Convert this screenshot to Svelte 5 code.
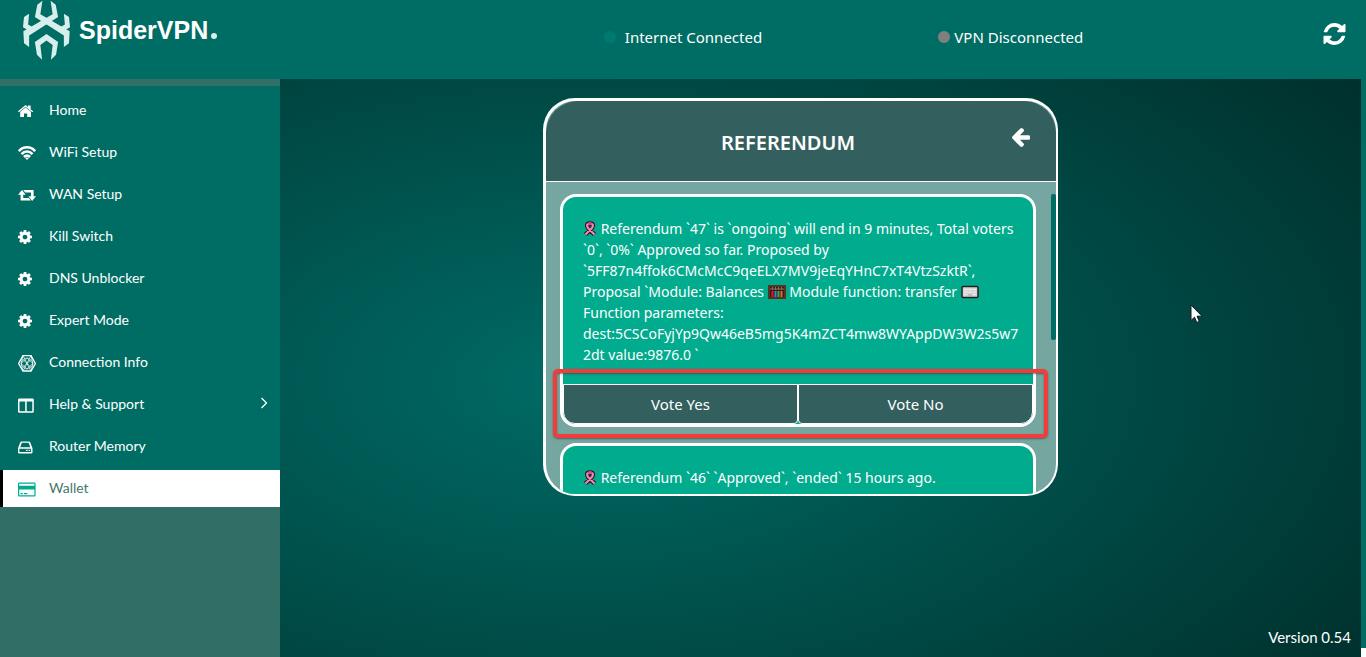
<script lang="ts">
	type Item = { label: string; icon: string; expandable?: boolean };

	const items: Item[] = [
		{ label: 'Home', icon: 'home' },
		{ label: 'WiFi Setup', icon: 'wifi' },
		{ label: 'WAN Setup', icon: 'wan' },
		{ label: 'Kill Switch', icon: 'cog' },
		{ label: 'DNS Unblocker', icon: 'cog' },
		{ label: 'Expert Mode', icon: 'cog' },
		{ label: 'Connection Info', icon: 'mesh' },
		{ label: 'Help & Support', icon: 'columns', expandable: true },
		{ label: 'Router Memory', icon: 'drive' },
		{ label: 'Wallet', icon: 'card' }
	];

	let active = $state('Wallet');
</script>

{#snippet menuIcon(name: string)}
	{#if name === 'home'}
		<svg class="icon" viewBox="0 0 18 18" aria-hidden="true">
			<path d="M0 9.200 7.600 3l2.400 2V3.400h2.600v3.800L15.200 9.200l-.8 1L7.600 4.700.8 10.200z" />
			<path d="M2.200 9.800 7.600 5.500l5.400 4.300V15H9.200v-3.600H6V15H2.200z" />
		</svg>
	{:else if name === 'wifi'}
		<svg class="icon" viewBox="0 0 18 18" aria-hidden="true">
			<g fill="none" stroke="currentColor" stroke-width="2.600">
				<path d="M.8 7.200C5.400 2 12.600 2 17.200 7.200" />
				<path d="M3.500 10.200c3.200-3.700 7.800-3.700 11 0" />
				<path d="M6 13c1.800-1.900 4.200-1.900 6 0" />
			</g>
			<path d="M7.200 14.200q1.800-1.200 3.600 0L9 16z" />
		</svg>
	{:else if name === 'wan'}
		<svg class="icon" viewBox="0 0 18 18" aria-hidden="true">
			<path d="M3.900 4 7.700 8.700H5.200v3.400h5.600l2 2.500H2.600V8.700H0z" />
			<path d="M5.200 4h10.400v6.200H18l-3.800 4.700-3.800-4.700H13V6.500H7.300z" />
		</svg>
	{:else if name === 'cog'}
		<svg class="icon cog" viewBox="0 0 1536 1536" aria-hidden="true">
			<path d="M1024 768q0-106-75-181t-181-75-181 75-75 181 75 181 181 75 181-75 75-181zm512-109v222q0 12-8 23t-20 13l-185 28q-19 54-39 91 35 50 107 138 10 12 10 25t-9 23q-27 37-99 108t-94 71q-12 0-26-9l-138-108q-44 23-91 38-16 136-29 186-7 28-36 28H657q-14 0-24.500-8.500T621 1511l-28-184q-49-16-90-37l-141 107q-10 9-25 9-14 0-25-11-126-114-165-168-7-10-7-23 0-12 8-23 15-21 51-66.500t54-70.500q-27-50-41-99L29 917q-13-2-21-12.500T0 881V659q0-12 8-23t19-13l186-28q14-46 39-92-40-57-107-138-10-12-10-24 0-10 9-23 26-36 98.500-107.500T337 139q13 0 26 10l138 107q44-23 91-38 16-136 29-186 7-28 36-28h222q14 0 24.500 8.500T915 34l28 184q49 16 90 37l142-107q9-9 24-9 13 0 25 10 129 119 165 170 7 8 7 22 0 12-8 23-15 21-51 66.500t-54 70.500q26 50 41 98l183 28q13 2 21 12.500t8 23.500z" />
		</svg>
	{:else if name === 'mesh'}
		<svg class="icon" viewBox="0 0 18 18" aria-hidden="true">
			<g fill="none" stroke="currentColor">
				<path d="M5 1.600h8L17.400 9.500 13 17H5L.6 9.500z" stroke-width="1.400" />
				<path
					d="M5 1.600 13 17M13 1.600 5 17M3 9.500 9 4l6 5.500L9 15zM5 1.600 3 9.500 5 17M13 1.600l2 7.900L13 17M5 5.500l8 8M13 5.500l-8 8"
					stroke-width=".7"
				/>
				<circle cx="9" cy="9.500" r="5.500" stroke-width=".5" />
			</g>
		</svg>
	{:else if name === 'columns'}
		<svg class="icon" viewBox="0 0 18 18" aria-hidden="true">
			<path fill-rule="evenodd" d="M1.500 2.500h13q1.300 0 1.300 1.300v11.700q0 1.300-1.300 1.300h-13Q0 16.800 0 15.500V3.800Q0 2.500 1.500 2.500zM1.500 5.500v9.800h5.700V5.500zM8.700 5.500v9.800h5.600V5.500z" />
		</svg>
	{:else if name === 'drive'}
		<svg class="icon" viewBox="0 0 18 18" aria-hidden="true">
			<path fill-rule="evenodd" d="M3.800 3.500h6.700q1.500 0 2 1.400l2 5.300v4q0 1.300-1.300 1.300H1.300Q0 15.500 0 14.200v-4l2-5.300q.4-1.400 1.800-1.400zM3.900 4.800 2.200 9.300h10.100l-1.700-4.500zM1.400 10.700V14H13v-3.300z" />
			<path d="M8 11.700h1.600v1.400H8zM10.600 11.700h1.600v1.400h-1.600z" />
		</svg>
	{:else}
		<svg class="icon" viewBox="0 0 18 18" aria-hidden="true">
			<path fill-rule="evenodd" d="M1.200 2.500h15.200q1.200 0 1.200 1.200v11.600q0 1.200-1.200 1.200H1.200Q0 16.500 0 15.300V3.700q0-1.200 1.200-1.200zM1.200 3.700v2.100h15.200V3.700zM1.200 9.500v5.800h15.200V9.500z" />
			<path d="M2.500 13h2.300v1.200H2.500zM6 13h3.300v1.200H6z" />
		</svg>
	{/if}
{/snippet}

{#snippet ribbon()}
	<svg class="emoji ribbon" viewBox="0 0 14 16" aria-label="ribbon" role="img">
		<g fill="none" stroke-linejoin="round">
			<path d="M2.500 13.500 9 7Q11.500 2.500 7 2.500T5 7l6.500 6.500" stroke="#2b1b22" stroke-width="4.500" />
			<path d="M2.500 13.500 9 7Q11.500 2.500 7 2.500T5 7l6.500 6.500" stroke="#f386b3" stroke-width="2.200" />
			<path d="M5 3Q7 1.500 9 3" stroke="#e0488b" stroke-width="2" />
		</g>
	</svg>
{/snippet}

{#snippet abacus()}
	<svg class="emoji" viewBox="0 0 18 14" aria-label="abacus" role="img">
		<path d="M1 1h16v12H1z" fill="#25232a" stroke="#5a3320" stroke-width="2" />
		<path d="M4.500 6v6" stroke="#e81224" stroke-width="2" />
		<path d="M7.500 6v6" stroke="#2c8cd8" stroke-width="2" />
		<path d="M10.500 6v6" stroke="#54a82f" stroke-width="2" />
		<path d="M13.500 6v6" stroke="#f2641c" stroke-width="2" />
		<path d="M2 4h14M4.500 2v3m3-3v3m3-3v3m3-3v3" stroke="#a56a45" />
	</svg>
{/snippet}

{#snippet keyboard()}
	<svg class="emoji" viewBox="0 0 18 14" aria-label="keyboard" role="img">
		<rect x="1" y="1.500" width="16" height="11" rx="1" fill="#d4d4d4" stroke="#202020" stroke-width="1.500" />
		<path d="M3 4.500h12M3 7h12M3 9.500h3m6 0h3" stroke="#f0f0f0" stroke-dasharray="2 .5" />
		<path d="M7 10h4" stroke="#aaa" />
	</svg>
{/snippet}

<div class="app">
	<header class="topbar">
		<a class="brand" href="#home">
			<svg class="logo" viewBox="0 0 138 176" aria-hidden="true">
				<path d="M57 2 42 14 35 50 120 104v34l15-11 2-35L51 42z" />
				<path d="M81 2 96 14l7 36L18 104v34L3 127 1 92 87 42z" />
				<path d="M18 40 3 50 0 80 20 92 34 83 15 72zM120 40l15 10 3 30-20 12-14-9 19-11z" />
				<path d="m69 100 34 23-6 38-15 14 5-43-18-13-18 13 5 43-15-14-6-38z" />
			</svg>
			<span class="brand-name">SpiderVPN</span>
			<span class="brand-dot"></span>
		</a>
		<p class="status"><span class="dot online"></span>Internet Connected</p>
		<p class="status close"><span class="dot"></span>VPN Disconnected</p>
		<button class="refresh" aria-label="Refresh">
			<svg viewBox="0 0 1536 1536" aria-hidden="true">
				<path d="M1511 928q0 5-1 7-64 268-268 434.500T764 1536q-146 0-282.500-55T238 1324l-129 129q-19 19-45 19t-45-19-19-45V960q0-26 19-45t45-19h448q26 0 45 19t19 45-19 45l-137 137q71 66 161 102t187 36q134 0 250-65t186-179q11-17 53-117 8-23 30-23h192q13 0 22.500 9.500t9.500 22.500zm25-800v448q0 26-19 45t-45 19h-448q-26 0-45-19t-19-45 19-45l138-138Q969 256 768 256q-134 0-250 65T332 500q-11 17-53 117-8 23-30 23H50q-13 0-22.500-9.500T18 608v-7q65-268 270-434.500T768 0q146 0 284 55.500T1297 212l130-129q19-19 45-19t45 19 19 45z" />
			</svg>
		</button>
	</header>

	<div class="layout">
		<nav class="sidebar" aria-label="Main menu">
			<ul class="menu">
				{#each items as item (item.label)}
					<li>
						<a
							href="#{item.icon}"
							class:active={active === item.label}
							onclick={() => (active = item.label)}
						>
							<span class="icon-slot">{@render menuIcon(item.icon)}</span>
							<span class="label">{item.label}</span>
							{#if item.expandable}
								<svg class="chevron" viewBox="0 0 8 12" aria-hidden="true">
									<path d="m1.500 1 5 5-5 5" />
								</svg>
							{/if}
						</a>
					</li>
				{/each}
			</ul>
		</nav>

		<main class="content">
			<section class="panel">
				<div class="panel-head">
					<h1>REFERENDUM</h1>
					<button class="back" aria-label="Back">
						<svg viewBox="64 -75 1472 1558" aria-hidden="true">
							<path d="M1536 640v128q0 53-32.500 90.500T1419 896H715l293 294q38 36 38 90t-38 90l-75 76q-37 37-90 37-52 0-91-37L101 794q-37-37-37-90 0-52 37-91l651-650q38-38 91-38 52 0 90 38l75 74q38 38 38 91t-38 91L715 512h704q52 0 84.500 37.500T1536 640z" />
						</svg>
					</button>
				</div>
				<div class="panel-body">
					<div class="list">
						<article class="card">
							<p>
								{@render ribbon()} Referendum `47` is `ongoing` will end in 9 minutes, Total voters<br />
								`0`, `0%` Approved so far. Proposed by<br />
								`5FF87n4ffok6CMcMcC9qeELX7MV9jeEqYHnC7xT4VtzSzktR`,<br />
								Proposal `Module: Balances {@render abacus()} Module function: transfer {@render keyboard()}<br />
								Function parameters:<br />
								dest:5CSCoFyjYp9Qw46eB5mg5K4mZCT4mw8WYAppDW3W2s5w7<br />2dt value:9876.0 `
							</p>
							<div class="votes">
								<button>Vote Yes</button>
								<button>Vote No</button>
								<span class="highlight"></span>
							</div>
						</article>
						<article class="card">
							<p>{@render ribbon()} Referendum `46` `Approved`, `ended` 15 hours ago.</p>
						</article>
					</div>
					<div class="thumb"></div>
				</div>
			</section>
			<p class="version">Version 0.54</p>
			<svg class="cursor" viewBox="0 0 13 20" aria-hidden="true">
				<path d="M1 1v15.500l3.500-3.300 2.300 5.300 2.500-1.100L7 12.200h5z" />
			</svg>
		</main>
		<div class="edge"></div>
	</div>
</div>

<style>
	:global(body) {
		margin: 0;
		background: #fff;
	}
	.app {
		display: flex;
		flex-direction: column;
		height: 100vh;
		overflow: hidden;
		color: #fff;
		font-family: 'Noto Sans', 'Open Sans', sans-serif;
	}
	.app * {
		box-sizing: border-box;
	}
	svg {
		display: block;
		fill: currentColor;
	}
	button {
		font: inherit;
		color: inherit;
		cursor: pointer;
	}
	p,
	h1 {
		margin: 0;
	}
	.topbar {
		display: grid;
		grid-template-columns: 38% 24% 24% 14%;
		flex: none;
		height: 79px;
		background: #006d65;
	}
	.brand {
		display: flex;
		align-items: center;
		align-self: start;
		height: 60px;
		padding-left: 23px;
		color: #fff;
		text-decoration: none;
	}
	.logo {
		width: 47px;
		height: 60px;
		color: #d7efec;
	}
	.brand-name {
		margin-left: 9px;
		font: bold 25px/30px 'Liberation Sans', sans-serif;
	}
	.brand-dot {
		width: 6px;
		height: 6px;
		margin: 12px 0 0 3px;
		border-radius: 50%;
		background: #d7efec;
	}
	.status {
		display: flex;
		align-items: center;
		justify-content: center;
		gap: 9px;
		padding-bottom: 5px;
		font-size: 15px;
	}
	.close {
		gap: 4px;
	}
	.dot {
		width: 12px;
		height: 12px;
		border-radius: 50%;
		background: #808080;
	}
	.online {
		background: #00796f;
	}
	.refresh {
		justify-self: end;
		align-self: start;
		margin: 23px 20px 0 0;
		padding: 0;
		border: 0;
		background: none;
	}
	.refresh svg {
		width: 23px;
		height: 22px;
	}
	.layout {
		display: flex;
		flex: 1;
		min-height: 0;
	}
	.sidebar {
		flex: 0 0 280px;
		padding-top: 7px;
		background: #306e66;
		font-family: Lato, sans-serif;
		font-size: 14px;
	}
	.menu {
		display: flex;
		flex-direction: column;
		gap: 5px;
		margin: 0;
		padding: 6px 0 0;
		list-style: none;
		background: #006d65;
	}
	.menu a {
		display: flex;
		align-items: center;
		height: 37px;
		padding: 0 12px 0 15px;
		border-left: 3px solid transparent;
		color: #fff;
		text-decoration: none;
	}
	.menu .active {
		border-left-color: #000;
		background: #fff;
		color: #45786f;
	}
	.icon-slot {
		width: 31px;
		padding-top: 1px;
	}
	.icon {
		width: 18px;
		height: 18px;
	}
	.cog {
		width: 14px;
		height: 14px;
	}
	.active .icon {
		color: #00ab8e;
	}
	.label {
		flex: 1;
		padding-bottom: 1px;
		line-height: 20px;
	}
	.chevron {
		width: 8px;
		height: 12px;
		margin-bottom: 3px;
		fill: none;
		stroke: currentColor;
		stroke-width: 1.3;
	}
	.content {
		position: relative;
		display: flex;
		flex: 1;
		flex-direction: column;
		padding: 19px 10px 10px;
		background: radial-gradient(ellipse 105% 105% at 28% 52%, #006b65, #002522);
	}
	.panel {
		display: flex;
		flex-direction: column;
		align-self: center;
		width: 100%;
		max-width: 515px;
		height: calc(100vh - 259px);
		margin-right: 40px;
		border: 3px solid #fff;
		border-right-width: 2px;
		border-bottom-width: 2px;
		border-radius: 32px;
		background: #75a69f;
		overflow: hidden;
	}
	.panel-head {
		display: grid;
		grid-template-columns: 1fr auto 1fr;
		flex: none;
		height: 81px;
		padding: 0 26px 0 0;
		border-bottom: 1px solid #fff;
		border-radius: 32px 32px 0 0;
		background: #33605e;
	}
	h1 {
		grid-column: 2;
		align-self: center;
		padding-top: 3px;
		font-size: 20px;
		font-weight: 600;
		line-height: 28px;
	}
	.back {
		justify-self: end;
		align-self: center;
		margin-bottom: 8px;
		padding: 0;
		border: 0;
		background: none;
	}
	.back svg {
		width: 18px;
		height: 19px;
	}
	.panel-body {
		display: flex;
		flex: 1;
		gap: 15px;
		min-height: 0;
		padding: 12px 0 0 14px;
	}
	.list {
		display: flex;
		flex: 1;
		flex-direction: column;
		gap: 16px;
		min-width: 0;
	}
	.card {
		flex: none;
		border: 3px solid #fff;
		border-radius: 16px;
		background: #00ab8e;
	}
	.card p {
		padding: 21px 0 19px 20px;
		font-size: 14px;
		line-height: 21px;
		white-space: nowrap;
	}
	.emoji {
		display: inline-block;
		width: 18px;
		height: 14px;
		vertical-align: -2px;
	}
	.ribbon {
		width: 14px;
		height: 16px;
		vertical-align: -3px;
	}
	.votes {
		position: relative;
		display: grid;
		grid-template-columns: 1fr 1fr;
	}
	.votes button {
		height: 40px;
		padding: 0;
		border: 1px solid #fff;
		border-radius: 0 0 12px 12px;
		background: #33605e;
		font-size: 15px;
	}
	.votes button:first-child {
		border-bottom-right-radius: 4px;
	}
	.votes button:nth-child(2) {
		border-bottom-left-radius: 4px;
	}
	/* callout frame around the vote buttons */
	.highlight {
		position: absolute;
		inset: -15px -15px -14px -10px;
		border: 4px solid #f23b3b;
		border-radius: 5px;
		box-shadow:
			0 1px 2px #3339,
			inset 0 1px 2px #3339;
		pointer-events: none;
	}
	.thumb {
		width: 5px;
		height: 146px;
		border-radius: 2px;
		background: #006d65;
	}
	.version {
		align-self: flex-end;
		margin-top: auto;
		font: 15px/20px Lato, sans-serif;
	}
	.cursor {
		position: absolute;
		top: 225px;
		right: 158px;
		width: 13px;
		height: 20px;
		fill: #fff;
		stroke: #101820;
	}
	.edge {
		flex: 0 0 5px;
		margin-bottom: 9px;
		background: #006d65;
	}
</style>
